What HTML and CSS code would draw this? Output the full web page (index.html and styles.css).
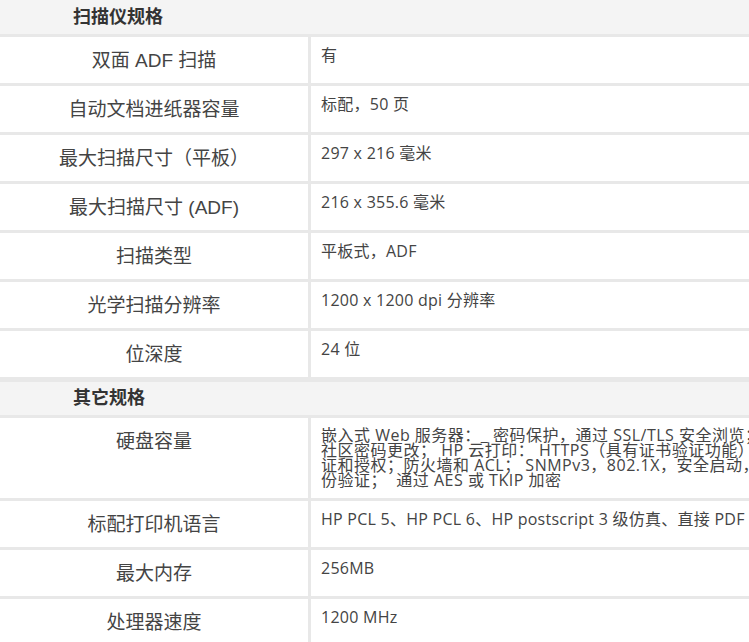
FILE: index.html
```html
<!DOCTYPE html>
<html lang="zh-CN">
<head>
<meta charset="utf-8">
<title>规格</title>
<link rel="stylesheet" href="styles.css">
</head>
<body>
<main class="specs">
  <h2 class="section first">扫描仪规格</h2>
  <div class="row"><div class="label">双面 ADF 扫描</div><div class="value">有</div></div>
  <div class="row"><div class="label">自动文档进纸器容量</div><div class="value">标配，50 页</div></div>
  <div class="row"><div class="label">最大扫描尺寸（平板）</div><div class="value">297 x 216 毫米</div></div>
  <div class="row"><div class="label">最大扫描尺寸 (ADF)</div><div class="value">216 x 355.6 毫米</div></div>
  <div class="row"><div class="label">扫描类型</div><div class="value">平板式，ADF</div></div>
  <div class="row"><div class="label">光学扫描分辨率</div><div class="value">1200 x 1200 dpi 分辨率</div></div>
  <div class="row"><div class="label">位深度</div><div class="value">24 位</div></div>
  <h2 class="section">其它规格</h2>
  <div class="row tall"><div class="label">硬盘容量</div><div class="value dense">嵌入式 Web 服务器：_ 密码保护，通过 SSL/TLS 安全浏览；<br>社区密码更改； HP 云打印： HTTPS（具有证书验证功能）<br>证和授权；防火墙和 ACL； SNMPv3，802.1X，安全启动，<br>份验证；&nbsp; 通过 AES 或 TKIP 加密</div></div>
  <div class="row"><div class="label">标配打印机语言</div><div class="value">HP PCL 5、HP PCL 6、HP postscript 3 级仿真、直接 PDF</div></div>
  <div class="row"><div class="label">最大内存</div><div class="value">256MB</div></div>
  <div class="row"><div class="label">处理器速度</div><div class="value">1200 MHz</div></div>
</main>
</body>
</html>
```
FILE: styles.css
```css
html, body {
  margin: 0;
  height: 642px;
  overflow: hidden;
  background: #fff;
}
.specs {
  width: 749px;
  font-family: "Open Sans", "Noto Sans CJK SC", sans-serif;
  color: #444;
}
.section {
  margin: 0;
  height: 33px;
  padding-left: 73px;
  background: #f4f4f4;
  border-top: 2px solid #e8e8e8;
  border-bottom: 3px solid #e8e8e8;
  font: bold 18px/33px "Liberation Sans", "Noto Sans CJK SC", sans-serif;
  color: #333;
}
.section.first {
  height: 34px;
  border-top: 0;
  line-height: 34px;
}
.row {
  display: grid;
  grid-template-columns: 308px 1fr;
  column-gap: 3px;
  height: 46px;
  background: #e8e8e8;
  border-bottom: 3px solid #e8e8e8;
}
.tall {
  height: 80px;
}
.label, .value {
  background: #fff;
  overflow: hidden;
  white-space: nowrap;
}
.label {
  padding-top: 11px;
  text-align: center;
  font-size: 19px;
  line-height: 26px;
  font-family: "Liberation Sans", "Noto Sans CJK SC", sans-serif;
}
.value {
  padding: 6px 0 0 10px;
  font-size: 16px;
  line-height: 24px;
  letter-spacing: 0.25px;
}
.dense {
  padding-top: 10px;
  line-height: 15px;
  letter-spacing: 0.5px;
}
```
